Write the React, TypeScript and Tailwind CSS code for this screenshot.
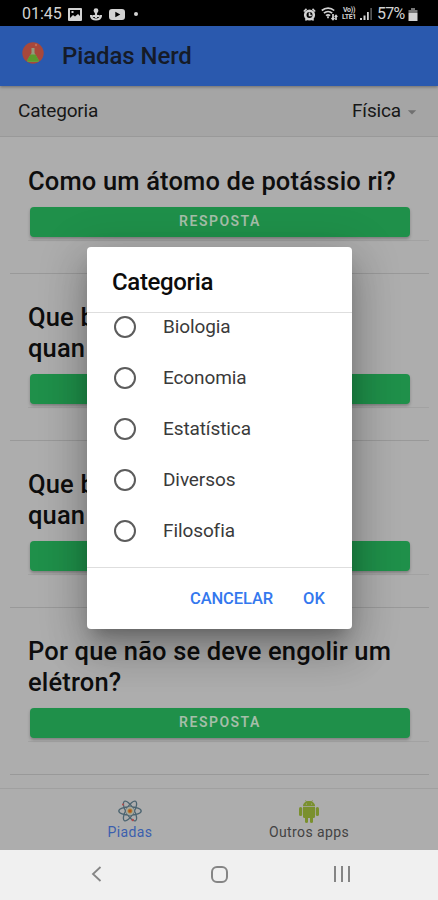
import { useState } from 'react';
import { MdArrowDropDown } from 'react-icons/md';

interface Joke {
  lines: string[];
}

const jokes: Joke[] = [
  { lines: ['Como um átomo de potássio ri?'] },
  { lines: ['Que b', 'quan'] },
  { lines: ['Que b', 'quan'] },
  { lines: ['Por que não se deve engolir um', 'elétron?'] },
];

const categories = ['Biologia', 'Economia', 'Estatística', 'Diversos', 'Filosofia'];

const StatusBar = () => (
  <div className="flex h-[26px] shrink-0 items-center justify-between bg-black pl-[22px] pr-[20px] pt-[2px] text-[#d2d2d2]">
    <div className="flex items-center">
      <span className="w-[41px] whitespace-nowrap text-[16px] leading-none">01:45</span>
      <svg className="ml-[5px] h-[13px] w-[14px]" viewBox="0 0 14 13">
        <path fill="currentColor" fillRule="evenodd" d="M1 0h12a1 1 0 0 1 1 1v11a1 1 0 0 1-1 1H1a1 1 0 0 1-1-1V1a1 1 0 0 1 1-1zm1 2v8l3-3 2 1.5L10 6l2 2V2H2zm1.5 1h2v2h-2z" />
      </svg>
      <svg className="ml-[8px] h-[13px] w-[12px]" viewBox="0 0 12 13">
        <circle cx="6" cy="2.7" r="2.4" fill="currentColor" />
        <path d="M6 4v6M1 7c0 3 2 4.5 5 4.5s5-1.5 5-4.5M2.5 8h7" fill="none" stroke="currentColor" strokeWidth="2.2" />
      </svg>
      <svg className="ml-[7px] h-[11px] w-[16px]" viewBox="0 0 16 11">
        <path fill="currentColor" fillRule="evenodd" d="M3 0h10a3 3 0 0 1 3 3v5a3 3 0 0 1-3 3H3a3 3 0 0 1-3-3V3a3 3 0 0 1 3-3zm3.3 2.7v5.6l5-2.8z" />
      </svg>
      <span className="ml-[9px] h-[4px] w-[4px] rounded-full bg-[#d2d2d2]" />
    </div>
    <div className="flex items-center">
      <svg className="h-[13px] w-[13px]" viewBox="0 0 13 13" fill="none" stroke="currentColor">
        <circle cx="6.5" cy="7" r="4.3" strokeWidth="2.6" />
        <path d="M.8 3.5 3.5.9M12.2 3.5 9.5.9M2.5 12.5l1.3-1.8M10.5 12.5 9.2 10.7M6.5 4.5v3h2.2" strokeWidth="1.6" />
      </svg>
      <svg className="ml-[5px] h-[14px] w-[17px]" viewBox="0 0 17 14" fill="none" stroke="currentColor" strokeWidth="1.7">
        <path d="M.8 3.5C4.5.2 9.7.2 13.2 3.5M2.9 6.2c2.4-2.1 5.9-2.1 8.3 0M5 8.7c1.2-1 2.9-1 4.1 0" />
        <path d="M7 9.2v2M12 7v5.5M10.500 11l1.500 1.500 1.500-1.500M15 13V8.500M13.800 10 15 8.500l1.200 1.500" />
      </svg>
      <span className="ml-[3px] flex w-[16px] flex-col items-center text-[7px] font-bold leading-[7px] tracking-[-0.3px]">
        <span>Vo))</span>
        <span>LTE1</span>
      </span>
      <svg className="ml-[3px] h-[12px] w-[12px]" viewBox="0 0 12 12" fill="currentColor">
        <path d="M0 10h2v2H0zM3.5 7.5h2V12h-2zM7 4h1.8v8H7z" />
        <path d="M10.3 0H12v12h-1.7z" opacity=".4" />
      </svg>
      <span className="ml-[5px] w-[30px] whitespace-nowrap text-[16px] leading-none tracking-[-0.8px]">57%</span>
      <svg className="ml-[1px] h-[13px] w-[10px]" viewBox="0 0 9 13">
        <path d="M2.5 0h4v2H9v3H0V2h2.5z" fill="#777" />
        <path d="M0 5h9v8H0z" fill="currentColor" />
      </svg>
    </div>
  </div>
);

const FlaskLogo = () => (
  <svg className="h-[22px] w-[22px]" viewBox="0 0 22 22">
    <circle cx="11" cy="11" r="10.7" fill="#a8483a" />
    <path d="M9.5 6h3v5l4 7c.5 1-.1 2-1.2 2H6.7c-1.1 0-1.7-1-1.2-2l4-7z" fill="#929b7c" />
    <path d="M8.5 12.5h5l3.2 5.5c.5 1-.1 1.7-1 1.7H6.3c-.9 0-1.5-.7-1-1.7z" fill="#5b9a2c" />
    <circle cx="14" cy="3" r="1.2" fill="#c16b54" />
  </svg>
);

const AtomIcon = () => (
  <svg className="h-[22px] w-[24px]" viewBox="0 0 24 22" fill="none" stroke="#4c6470" strokeWidth="1.3">
    <ellipse cx="12" cy="11" rx="11.2" ry="4" />
    <ellipse cx="12" cy="11" rx="11.2" ry="4" transform="rotate(60 12 11)" />
    <ellipse cx="12" cy="11" rx="11.2" ry="4" transform="rotate(120 12 11)" />
    <circle cx="12" cy="11" r="4.2" fill="#a5a79d" stroke="none" />
    <circle cx="12" cy="11" r="2.1" fill="#b5541d" stroke="#b08a3a" strokeWidth=".8" />
    <circle cx="5" cy="4.5" r="1" fill="#b34a4a" stroke="none" />
    <circle cx="14.7" cy="20" r="1.2" fill="#b34a4a" stroke="none" />
  </svg>
);

const RobotIcon = () => (
  <svg className="h-[23px] w-[20px]" viewBox="0 0 20 23" fill="#7a902e">
    <path d="M4 6.3C4 3 6.6 1 10 1s6 2 6 5.3z" />
    <path d="M6.5.3 7.6 2M13.5.3 12.4 2" stroke="#7a902e" strokeWidth=".7" />
    <path d="M4 7h12v9.5a1.5 1.5 0 0 1-1.5 1.5h-9A1.5 1.5 0 0 1 4 16.5z" />
    <rect x="0" y="7" width="3.2" height="9" rx="1.6" />
    <rect x="16.8" y="7" width="3.2" height="9" rx="1.6" />
    <rect x="6" y="15" width="3" height="8" rx="1.5" />
    <rect x="11" y="15" width="3" height="8" rx="1.5" />
    <circle cx="7.4" cy="4" r=".6" fill="#adadad" />
    <circle cx="12.6" cy="4" r=".6" fill="#adadad" />
  </svg>
);

const JokeItem = ({ joke }: { joke: Joke }) => (
  <div className="ml-[10px] mr-[9px] border-b border-[#999] pt-[28.3px]">
    <div className="ml-[18px] border-b border-[#a2a2a2] pb-[3px]">
      <h2 className="text-[25.5px] font-medium leading-[31px] tracking-[0.16px] text-[#0e0e0e]">
        {joke.lines.map((line) => (
          <span key={line} className="block whitespace-nowrap">{line}</span>
        ))}
      </h2>
      <button className="ml-[2px] mt-[10px] flex h-[30px] w-[380px] items-center justify-center rounded-[4px] bg-[#1f904a] pb-[1px] text-[14px] font-semibold tracking-[1.5px] text-[#a5bea9] shadow-[0_2px_3px_rgba(0,0,0,0.25)]">
        RESPOSTA
      </button>
    </div>
    <div className="h-[32px]" />
  </div>
);

export default function App() {
  const [selected, setSelected] = useState('');

  return (
    <div className="relative flex h-[900px] w-[438px] flex-col overflow-hidden bg-[#adadad] font-[Roboto,sans-serif]">
      <StatusBar />

      <header className="z-10 flex h-[60px] shrink-0 items-center bg-[#2a59ae] pl-[22px] pb-[6px] shadow-[0_1px_3px_rgba(0,0,0,0.35)]">
        <FlaskLogo />
        <h1 className="ml-[18px] mt-[6px] text-[24px] font-medium tracking-[-0.1px] text-[#151b28]">Piadas Nerd</h1>
      </header>

      <div className="flex h-[51px] shrink-0 items-center justify-between border-b border-[#999] bg-[#a5a5a5] pl-[18px] pr-[16px] pt-[1px] text-[19px] text-[#171717]">
        <span className="tracking-[-0.2px]">Categoria</span>
        <span className="flex items-center tracking-[-0.15px]">
          Física
          <MdArrowDropDown className="ml-[1px] h-[20px] w-[20px] text-[#707070]" />
        </span>
      </div>

      <main className="h-[651px] shrink-0 overflow-hidden pt-[0.3px]">
        {jokes.map((joke, i) => (
          <JokeItem key={i} joke={joke} />
        ))}
      </main>

      <footer className="flex h-[62px] shrink-0 border-t border-[#a0a0a0] text-[14px] leading-[18px] tracking-[0.4px]">
        <div className="ml-[41px] flex w-[178px] flex-col items-center pt-[11px] text-[#3b5fae]">
          <AtomIcon />
          <span className="mt-[1px]">Piadas</span>
        </div>
        <div className="flex w-[180px] flex-col items-center pt-[11px] text-[#434343]">
          <RobotIcon />
          <span>Outros apps</span>
        </div>
      </footer>

      <nav className="flex h-[50px] shrink-0 items-center bg-[#f0f0f0] pb-[2px] pl-[91px] text-[#858585]">
        <svg className="h-[16px] w-[11px]" viewBox="0 0 11 16" fill="none" stroke="currentColor" strokeWidth="1.8">
          <path d="M9.5 1 2 8l7.5 7" />
        </svg>
        <span className="ml-[109px] h-[17px] w-[17px] rounded-[6px] border-2 border-[#858585]" />
        <svg className="ml-[106px] h-[16px] w-[16px]" viewBox="0 0 16 16" fill="none" stroke="currentColor" strokeWidth="2">
          <path d="M1 0v16M8 0v16M15 0v16" />
        </svg>
      </nav>

      {/* Category picker */}
      <div className="absolute left-[87px] top-[247px] z-20 flex h-[382px] w-[265px] flex-col overflow-hidden rounded-[4px] bg-white shadow-[0_12px_16px_-7px_rgba(0,0,0,0.25),0_24px_38px_3px_rgba(0,0,0,0.16),0_9px_46px_8px_rgba(0,0,0,0.14)]">
        <h2 className="h-[66px] shrink-0 border-b border-[#dedede] pl-[25px] pt-[17px] text-[24px] font-medium leading-[36px] tracking-[-0.35px] text-[#0c0c0c]">
          Categoria
        </h2>
        <div className="flex h-[254px] shrink-0 flex-col overflow-hidden">
          {categories.map((name) => (
            <button
              key={name}
              onClick={() => setSelected(name)}
              className="flex h-[51px] shrink-0 items-center pl-[27px] text-left text-[19px] tracking-[-0.1px] text-[#3a3a3a] first:-mt-[11px]"
            >
              <span className="-mt-[1px] flex h-[22px] w-[22px] items-center justify-center rounded-full border-2 border-[#5c5c5c]">
                {selected === name && <span className="h-[11px] w-[11px] rounded-full bg-[#3880ff]" />}
              </span>
              <span className="ml-[27px]">{name}</span>
            </button>
          ))}
        </div>
        <div className="flex flex-1 items-center border-t border-[#dedede] pl-[103px] pt-[1px] text-[16.5px] font-medium tracking-[-0.1px] text-[#3478ee]">
          <button>CANCELAR</button>
          <button className="ml-[30px]">OK</button>
        </div>
      </div>
    </div>
  );
}
